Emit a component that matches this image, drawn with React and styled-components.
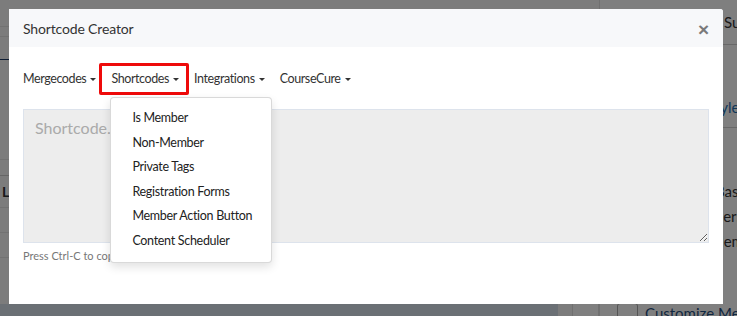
import React from 'react';
import styled, { createGlobalStyle } from 'styled-components';

const GlobalStyle = createGlobalStyle`
  html, body {
    margin: 0;
    padding: 0;
    background: #ffffff;
  }
  body {
    font-family: Lato, "Open Sans", Arial, sans-serif;
  }
  * {
    box-sizing: border-box;
  }
`;

const Page = styled.div`
  position: relative;
  width: 737px;
  height: 316px;
  overflow: hidden;
  display: flex;
  background: #ffffff;
  font-family: Lato, Arial, sans-serif;
`;

const MainColumn = styled.div`
  flex: 0 0 599px;
  display: flex;
  flex-direction: column;
  background: #f8f8f8;
`;

const MainRow = styled.div`
  height: ${(p) => p.h}px;
  border-bottom: 1px solid ${(p) => p.line || '#e4e4e4'};
  font-size: 14px;
  font-weight: 700;
  color: #333;
  display: flex;
  align-items: center;
  padding-left: 2px;
`;

const Footer = styled.div`
  margin-top: auto;
  height: 12px;
  display: flex;
`;

const FooterBar = styled.div`
  flex: 0 0 558px;
  background: #d6e0ea;
`;

const FooterGap = styled.div`
  flex: 1;
  border-right: 1px solid #e0e0e0;
  margin-left: 14px;
  border-left: 1px solid #e0e0e0;
  background: #ffffff;
`;

const SidePanel = styled.div`
  flex: 1;
  display: flex;
  flex-direction: column;
  border-left: 1px solid #e0e0e0;
  background: #ffffff;
`;

const SideRow = styled.div`
  height: ${(p) => p.h}px;
  display: flex;
  align-items: center;
  padding-left: ${(p) => p.indent || 124}px;
  padding-bottom: ${(p) => p.pb || 0}px;
  font-size: 15px;
  white-space: nowrap;
  color: ${(p) => (p.link ? '#1f6fb2' : '#333')};
  border-bottom: ${(p) => (p.line ? '1px solid #d0d0d0' : 'none')};
`;

const SideCheckRow = styled.div`
  margin-top: auto;
  display: flex;
  align-items: center;
  gap: 7px;
  padding-left: 17px;
  height: 22px;
  font-size: 15px;
  color: #1f4f82;
  white-space: nowrap;
  transform: translateY(8px);
`;

const CheckBox = styled.span`
  width: 21px;
  height: 20px;
  border: 1px solid #aaa;
  border-radius: 3px;
  background: #fff;
`;

const Backdrop = styled.div`
  position: absolute;
  inset: 0;
  background: rgba(0, 0, 0, 0.5);
`;

const Modal = styled.div`
  position: absolute;
  left: 9px;
  top: 9px;
  width: 714px;
  height: 295px;
  background: #ffffff;
  border-radius: 0 3px 0 0;
  display: flex;
  flex-direction: column;
`;

const Header = styled.div`
  height: 38px;
  background: #f7f8fa;
  display: flex;
  align-items: center;
  justify-content: space-between;
  padding: 0 14px 0 14px;
  border-radius: 0 3px 0 0;
`;

const Title = styled.h4`
  margin: 0;
  font-size: 14px;
  font-weight: 400;
  color: #333;
  letter-spacing: -0.15px;
`;

const Close = styled.button`
  border: 0;
  background: none;
  padding: 0;
  margin-top: 2px;
  font-family: Arial, sans-serif;
  font-size: 19px;
  font-weight: 700;
  line-height: 1;
  color: #7a7a7a;
  cursor: pointer;
`;

const Body = styled.div`
  padding: 23px 14px 0 14px;
  display: flex;
  flex-direction: column;
`;

const NavBar = styled.div`
  display: flex;
  gap: 15px;
  height: 18px;
  align-items: center;
`;

const NavItem = styled.div`
  position: relative;
  display: flex;
  align-items: center;
  font-size: 12.5px;
  letter-spacing: -0.4px;
  line-height: 18px;
  color: #333;
  white-space: nowrap;

  ${(p) =>
    p.active &&
    `
    &::after {
      content: '';
      position: absolute;
      left: -12px;
      right: -10px;
      top: -7px;
      bottom: -7px;
      border: 3px solid #ee0a0a;
      border-radius: 2px;
    }
  `}
`;

const Caret = styled.span`
  display: inline-block;
  margin-left: 4px;
  margin-top: 1px;
  width: 0;
  height: 0;
  border-left: 3px solid transparent;
  border-right: 3px solid transparent;
  border-top: 3px solid #333;
`;

const Menu = styled.ul`
  position: absolute;
  left: -1px;
  top: 27px;
  width: 162px;
  margin: 0;
  padding: 8px 0;
  list-style: none;
  background: #ffffff;
  border: 1px solid rgba(0, 0, 0, 0.15);
  border-radius: 4px;
  box-shadow: 0 4px 10px rgba(0, 0, 0, 0.12);
  letter-spacing: -0.3px;
  z-index: 5;
`;

const MenuItem = styled.li`
  padding: 3px 21px;
  font-size: 12.5px;
  line-height: 18.6px;
  color: #222;
  white-space: nowrap;
`;

const CodeBox = styled.textarea`
  margin-top: 21px;
  width: 686px;
  height: 134px;
  resize: both;
  border: 1px solid #dde3ec;
  border-radius: 0;
  background: #ededed;
  padding: 8px 11px;
  font-family: Lato, Arial, sans-serif;
  font-size: 16px;
  color: #333;
  outline: none;

  &::placeholder {
    color: #aaa;
  }
`;

const HelpText = styled.p`
  margin: 5px 0 0 0;
  font-size: 11px;
  line-height: 16px;
  color: #777;
`;

const navItems = ['Mergecodes', 'Shortcodes', 'Integrations', 'CourseCure'];

const shortcodeItems = [
  'Is Member',
  'Non-Member',
  'Private Tags',
  'Registration Forms',
  'Member Action Button',
  'Content Scheduler',
];

function ShortcodeCreator() {
  return (
    <Modal>
      <Header>
        <Title>Shortcode Creator</Title>
        <Close aria-label="Close">×</Close>
      </Header>
      <Body>
        <NavBar>
          {navItems.map((name) => (
            <NavItem key={name} active={name === 'Shortcodes'}>
              {name}
              <Caret />
              {name === 'Shortcodes' && (
                <Menu>
                  {shortcodeItems.map((item) => (
                    <MenuItem key={item}>{item}</MenuItem>
                  ))}
                </Menu>
              )}
            </NavItem>
          ))}
        </NavBar>
        <CodeBox placeholder="Shortcode..." readOnly />
        <HelpText>Press Ctrl-C to copy the shortcode</HelpText>
      </Body>
    </Modal>
  );
}

export default function App() {
  return (
    <>
      <GlobalStyle />
      <Page>
        <MainColumn>
          <MainRow h={27} />
          <MainRow h={10} />
          <MainRow h={23} line="#1c3a66" />
          <MainRow h={100} />
          <MainRow h={16} line="#cccccc" />
          <MainRow h={32}>LL</MainRow>
          <MainRow h={25} />
          <MainRow h={25} />
          <Footer>
            <FooterBar />
            <FooterGap />
          </Footer>
        </MainColumn>
        <SidePanel>
          <SideRow h={45} line>Sub</SideRow>
          <SideRow h={45} />
          <SideRow h={38} pb={4} line link indent={107}>Style</SideRow>
          <SideRow h={50} />
          <SideRow h={25} indent={115}>Base</SideRow>
          <SideRow h={25} indent={106}>Users</SideRow>
          <SideRow h={25} indent={110}>Members</SideRow>
          <SideCheckRow>
            <CheckBox />
            Customize Members
          </SideCheckRow>
        </SidePanel>
        <Backdrop />
        <ShortcodeCreator />
      </Page>
    </>
  );
}
